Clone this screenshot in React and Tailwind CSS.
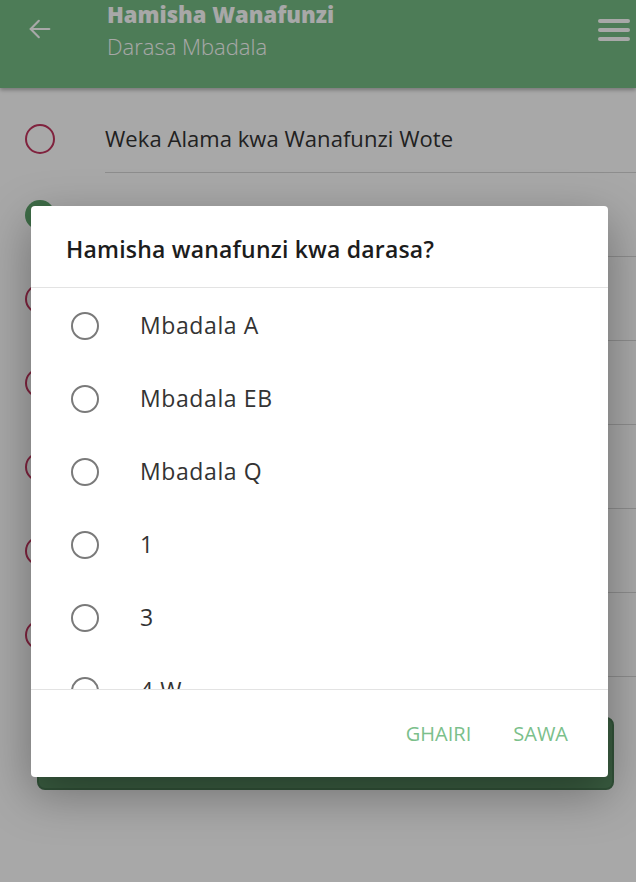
import React from "react";

const font = { fontFamily: '"Open Sans", "Liberation Sans", sans-serif' };

function Row({ kind, label, first }) {
  return (
    <div className={first ? "flex h-[84px] items-stretch pt-[16px]" : "flex h-[84px] items-stretch"}>
      <div className="flex w-[105px] shrink-0 items-center pl-[25px]">
        {kind === "green" ? (
          <div className="h-[30px] w-[30px] rounded-full bg-[#5ea56d]" />
        ) : (
          <div className="h-[30px] w-[30px] rounded-full border-2 border-[#c2355e]" />
        )}
      </div>
      <div className="flex flex-1 items-center border-b border-[#d6d6d6]">
        <span className="text-[22px] tracking-[0.05px] text-[#333]">{label}</span>
      </div>
    </div>
  );
}

const options = ["Mbadala A", "Mbadala EB", "Mbadala Q", "1", "3", "4 W"];

export default function App() {
  return (
    <div className="relative h-[882px] w-full overflow-hidden bg-white" style={font}>
      {/* Header */}
      <div className="relative z-10 flex h-[88px] items-start bg-[#76bd85] shadow-[0_2px_4px_rgba(0,0,0,0.3)]">
        <div className="flex h-[58px] w-[107px] items-center pl-[26px]">
          <svg width="28" height="28" viewBox="0 0 24 24" fill="none" stroke="white" strokeWidth="1.8" strokeLinecap="round" strokeLinejoin="round">
            <path d="M20 12H4" />
            <path d="M11 5l-7 7 7 7" />
          </svg>
        </div>
        <div className="flex flex-1 flex-col">
          <span className="text-[22px] font-extrabold leading-[28px] text-white">Hamisha Wanafunzi</span>
          <span className="text-[22px] font-light leading-[37px] text-white">Darasa Mbadala</span>
        </div>
        <div className="flex flex-col gap-[5px] pr-[6px] pt-[19px]">
          <div className="h-[4px] w-[32px] rounded-full bg-white" />
          <div className="h-[4px] w-[32px] rounded-full bg-white" />
          <div className="h-[4px] w-[32px] rounded-full bg-white" />
        </div>
      </div>

      {/* List */}
      <div className="pt-[1px]">
        <Row kind="red" label="Weka Alama kwa Wanafunzi Wote" first />
        <Row kind="green" label="" />
        <Row kind="red" label="" />
        <Row kind="red" label="" />
        <Row kind="red" label="" />
        <Row kind="red" label="" />
        <Row kind="red" label="" />
      </div>

      <div className="ml-[37px] mr-[22px] mt-[40px] h-[73px] rounded-lg border-2 border-[#4d7e57] bg-[#5a9065]" />

      {/* Overlay */}
      <div className="absolute inset-0 z-20 bg-black/[0.34]" />

      {/* Dialog */}
      <div className="absolute left-[31px] top-[206px] z-30 flex h-[571px] w-[577px] flex-col rounded-[4px] bg-white shadow-[0_16px_48px_rgba(0,0,0,0.35)]">
        <div className="flex h-[82px] shrink-0 items-center border-b border-[#e3e3e3] pl-[35px] pt-[6px]">
          <span className="text-[23px] font-semibold tracking-[0.2px] text-[#1c1c1c]">Hamisha wanafunzi kwa darasa?</span>
        </div>
        <div className="h-[402px] shrink-0 overflow-hidden border-b border-[#e3e3e3]">
          {options.map((o) => (
            <div key={o} className="flex h-[73px] items-center pt-[2px]">
              <div className="flex w-[109px] shrink-0 pl-[40px]">
                <div className="h-[28px] w-[28px] rounded-full border-[2.5px] border-[#7a7a7a]" />
              </div>
              <span className="text-[23px] tracking-[0.6px] text-[#333]">{o}</span>
            </div>
          ))}
        </div>
        <div className="flex flex-1 items-center justify-end gap-[42px] pr-[40px]">
          <span className="text-[20px] text-[#7bc08b]">GHAIRI</span>
          <span className="text-[20px] text-[#7bc08b]">SAWA</span>
        </div>
      </div>
    </div>
  );
}
